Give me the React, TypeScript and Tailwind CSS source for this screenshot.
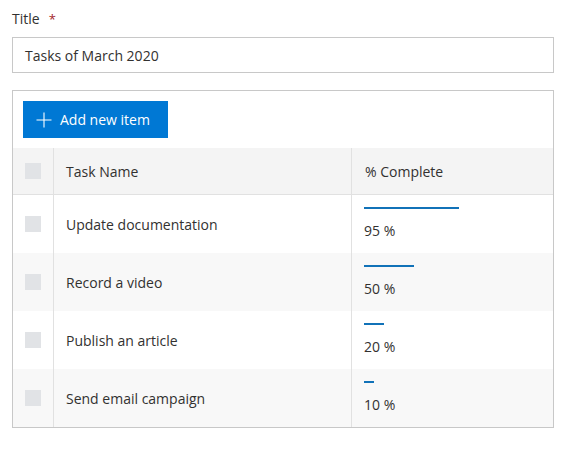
const tasks = [
  { name: "Update documentation", pct: 95 },
  { name: "Record a video", pct: 50 },
  { name: "Publish an article", pct: 20 },
  { name: "Send email campaign", pct: 10 },
]

function Check() {
  return <span className="block w-4 h-4 bg-[#e1e3e6]" />
}

export default function App() {
  return (
    <div
      className="w-[566px] h-[459px] bg-white px-3 pt-[9px] text-[14px] text-[#323130]"
      style={{ fontFamily: '"Segoe UI", "Open Sans", "Liberation Sans", sans-serif' }}
    >
      <label className="flex items-center h-[20px] leading-[20px]">
        Title
        <span className="ml-[9px] text-[#a4262c] text-[13px]">*</span>
      </label>
      <div className="mt-[8px] h-[36px] border border-[#c8c8c8] flex items-center px-3">
        Tasks of March 2020
      </div>

      <div className="mt-[17px] border border-[#c8c8c8]">
        <div className="pt-[10px] pl-[10px] pb-[10px]">
          <button className="h-[37px] w-[145px] bg-[#0078d4] text-white flex items-center pl-[13px] gap-[8px]">
            <svg className="w-[16px] h-[16px]" viewBox="0 0 16 16" fill="none" stroke="currentColor" strokeWidth={1.1}>
              <path d="M8 0.5v15M0.5 8h15" />
            </svg>
            <span className="leading-none">Add new item</span>
          </button>
        </div>

        <div className="flex h-[47px] bg-[#f4f4f4] border-b border-[#e1e1e1]">
          <div className="w-[41px] border-r border-[#e1e1e1] flex items-center pl-[12px]">
            <Check />
          </div>
          <div className="w-[298px] border-r border-[#e1e1e1] flex items-center pl-[12px]">Task Name</div>
          <div className="flex-1 flex items-center pl-[13px]">% Complete</div>
        </div>

        {tasks.map((t, i) => (
          <div key={t.name} className={`flex h-[58px] ${i % 2 === 1 ? "bg-[#f8f8f8]" : "bg-white"}`}>
            <div className="w-[41px] border-r border-[#e1e1e1] flex items-center pl-[12px]">
              <Check />
            </div>
            <div className="w-[298px] border-r border-[#e1e1e1] flex items-center pl-[12px]">{t.name}</div>
            <div className="flex-1 pl-[12px] pt-[12px]">
              <div className="w-[100px] h-[2px]">
                <div className="h-[2px] bg-[#1172b8]" style={{ width: `${t.pct}%` }} />
              </div>
              <div className="mt-[12px] leading-[20px]">{t.pct} %</div>
            </div>
          </div>
        ))}
      </div>
    </div>
  )
}
